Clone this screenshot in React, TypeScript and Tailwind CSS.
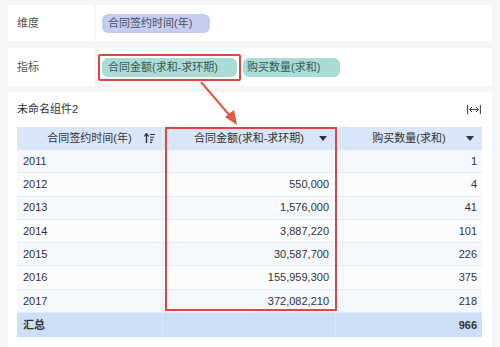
import React from "react";

const rows: [string, string, string][] = [
  ["2011", "", "1"],
  ["2012", "550,000", "4"],
  ["2013", "1,576,000", "41"],
  ["2014", "3,887,220", "101"],
  ["2015", "30,587,700", "226"],
  ["2016", "155,959,300", "375"],
  ["2017", "372,082,210", "218"],
];

function Caret() {
  return (
    <svg width="8" height="5" viewBox="0 0 8 5" className="absolute right-[8px] top-[9px]">
      <polygon points="0,0 8,0 4,5" fill="#2f3440" />
    </svg>
  );
}

function SortIcon() {
  return (
    <svg width="11" height="10" viewBox="0 0 11 10" className="absolute right-[7px] top-[6px]">
      <path d="M2.5 10 V1.2" stroke="#2f3440" strokeWidth="1.4" fill="none" />
      <path d="M0.3 3.4 L2.5 0.6 L4.7 3.4" stroke="#2f3440" strokeWidth="1.3" fill="none" />
      <path d="M6 1.5 H11 M6 4.2 H10 M6 6.9 H9 M6 9.4 H8" stroke="#2f3440" strokeWidth="1.1" />
    </svg>
  );
}

export default function App() {
  return (
    <div className="relative w-[500px] h-[347px] overflow-hidden bg-[#f4f5f7] px-[8px] pt-[5px] font-['Liberation_Sans','Noto_Sans_CJK_SC',sans-serif] text-[11px] text-[#333]">
      {/* 维度 */}
      <div className="flex h-[36px] items-center bg-white">
        <div className="flex h-full w-[88px] items-center border-r border-[#eef0f3] pl-[9px] text-[#555]">维度</div>
        <div className="ml-[6px] flex h-[19px] w-[108px] items-center rounded-[6px] bg-[#c5cdee] pl-[6px] text-[#4a4f63]">
          合同签约时间(年)
        </div>
      </div>
      {/* 指标 */}
      <div className="mt-[7px] flex h-[38px] items-center bg-white">
        <div className="flex h-full w-[88px] items-center border-r border-[#eef0f3] pl-[9px] text-[#555]">指标</div>
        <div className="ml-[2px] rounded-[2px] border-2 border-[#e0453f] p-[2px]">
          <div className="flex h-[19px] w-[135px] items-center rounded-[6px] bg-[#a8dcd7] pl-[6px] text-[#3f5552]">
            合同金额(求和-求环期)
          </div>
        </div>
        <div className="ml-[2px] flex h-[19px] w-[97px] items-center rounded-[6px] bg-[#a8dcd7] pl-[4px] text-[#3f5552]">
          购买数量(求和)
        </div>
      </div>
      {/* 表格 */}
      <div className="mt-[6px] h-[260px] bg-white pl-[9px] pr-[10px]">
        <div className="flex h-[35px] items-center justify-between">
          <span className="text-[#333]">未命名组件2</span>
          <svg width="14" height="9" viewBox="0 0 14 9" className="mr-[1px]">
            <path d="M0.6 0 V9 M13.4 0 V9" stroke="#444" strokeWidth="1.1" />
            <path d="M2.5 4.5 H11.5" stroke="#444" strokeWidth="1" />
            <path d="M5 2 L2.5 4.5 L5 7 M9 2 L11.5 4.5 L9 7" stroke="#444" strokeWidth="1" fill="none" />
          </svg>
        </div>
        <div className="grid grid-cols-[146px_173px_146px]">
          <div className="relative flex h-[23px] items-center justify-center border-r border-[#edf2fa] bg-[#d9e6f9]">
            合同签约时间(年)
            <SortIcon />
          </div>
          <div className="relative flex h-[23px] items-center justify-center border-r border-[#edf2fa] bg-[#d9e6f9]">
            合同金额(求和-求环期)
            <Caret />
          </div>
          <div className="relative flex h-[23px] items-center justify-center bg-[#d9e6f9]">
            购买数量(求和)
            <Caret />
          </div>
          {rows.map((r, i) => {
            const bg = i % 2 === 0 ? "bg-[#f4f7fc]" : "bg-[#fbfcfe]";
            return (
              <React.Fragment key={r[0]}>
                <div className={`flex h-[23.3px] items-center border-r border-b border-[#e6ecf5] pl-[6px] ${bg}`}>{r[0]}</div>
                <div className={`flex h-[23.3px] items-center justify-end border-r border-b border-[#e6ecf5] pr-[6px] ${bg}`}>{r[1]}</div>
                <div className={`flex h-[23.3px] items-center justify-end border-b border-[#e6ecf5] pr-[5px] ${bg}`}>{r[2]}</div>
              </React.Fragment>
            );
          })}
          <div className="flex h-[24px] items-center border-r border-[#dbe7f8] bg-[#cddff7] pl-[6px] font-bold">汇总</div>
          <div className="flex h-[24px] items-center border-r border-[#dbe7f8] bg-[#cddff7]"></div>
          <div className="flex h-[24px] items-center justify-end bg-[#cddff7] pr-[5px] font-bold">966</div>
        </div>
      </div>
      {/* 红框 (列) */}
      <div className="pointer-events-none absolute left-[165px] top-[127px] h-[184px] w-[172px] border-2 border-[#e0453f]"></div>
      {/* 箭头 */}
      <svg className="pointer-events-none absolute left-0 top-0" width="500" height="347">
        <line x1="201" y1="82" x2="231" y2="117" stroke="#e8553f" strokeWidth="2" />
        <polygon points="237,125 225,117 234,110" fill="#e8553f" />
      </svg>
    </div>
  );
}
